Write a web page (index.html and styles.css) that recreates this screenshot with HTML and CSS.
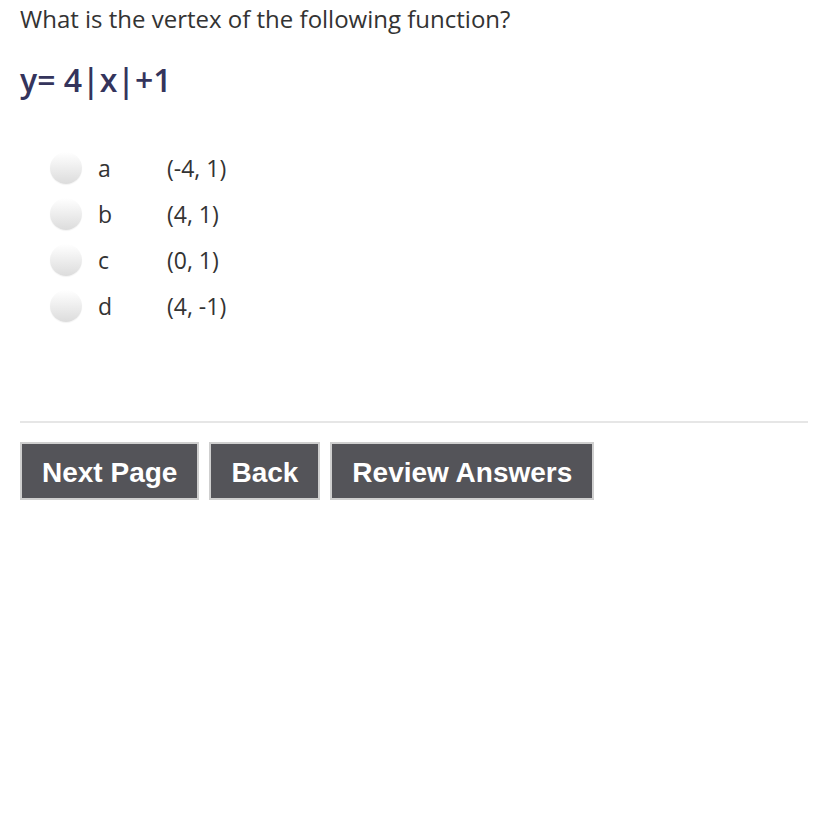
FILE: index.html
```html
<!DOCTYPE html>
<html>
<head>
<meta charset="utf-8">
<link rel="stylesheet" href="styles.css">
</head>
<body>
<div class="page">
  <p class="question">What is the vertex of the following function?</p>
  <p class="equation">y= 4|x|+1</p>
  <ul class="options">
    <li class="option"><span class="radio"></span><span class="letter">a</span><span class="value">(-4, 1)</span></li>
    <li class="option"><span class="radio"></span><span class="letter">b</span><span class="value">(4, 1)</span></li>
    <li class="option"><span class="radio"></span><span class="letter">c</span><span class="value">(0, 1)</span></li>
    <li class="option"><span class="radio"></span><span class="letter">d</span><span class="value">(4, -1)</span></li>
  </ul>
  <hr class="divider">
  <div class="buttons">
    <button class="btn">Next Page</button>
    <button class="btn">Back</button>
    <button class="btn">Review Answers</button>
  </div>
</div>
</body>
</html>
```
FILE: styles.css
```css
html, body {
  margin: 0;
  padding: 0;
  background: #fff;
}
.page {
  padding: 0 20px;
  font-family: "Open Sans", "Liberation Sans", sans-serif;
  color: #333;
}
.question {
  margin: 0;
  padding-top: 3px;
  font-size: 24px;
  line-height: 32px;
}
.equation {
  margin: 0;
  margin-top: 25px;
  font-size: 32px;
  line-height: 40px;
  font-weight: 600;
  color: #34345c;
}
.options {
  list-style: none;
  margin: 45px 0 0 0;
  padding: 0 0 0 30px;
}
.option {
  display: flex;
  align-items: center;
  height: 46px;
  font-size: 23px;
  color: #333;
}
.radio {
  width: 32px;
  height: 32px;
  border-radius: 50%;
  background: linear-gradient(#ffffff, #dcdcdc);
  box-shadow: 0 1px 1px rgba(0,0,0,0.05);
  flex: none;
}
.letter {
  width: 85px;
  padding-left: 16px;
  box-sizing: border-box;
}
.divider {
  margin: 92px 0 19px 0;
  border: none;
  border-top: 2px solid #e6e6e6;
}
.buttons {
  display: flex;
  gap: 10px;
}
.btn {
  font-family: "Liberation Sans", Arial, sans-serif;
  font-weight: bold;
  font-size: 28px;
  color: #fff;
  background: #545459;
  border: 2px solid #cfcfcf;
  height: 58px;
  padding: 3px 20px 0 20px;
  margin: 0;
}
```
